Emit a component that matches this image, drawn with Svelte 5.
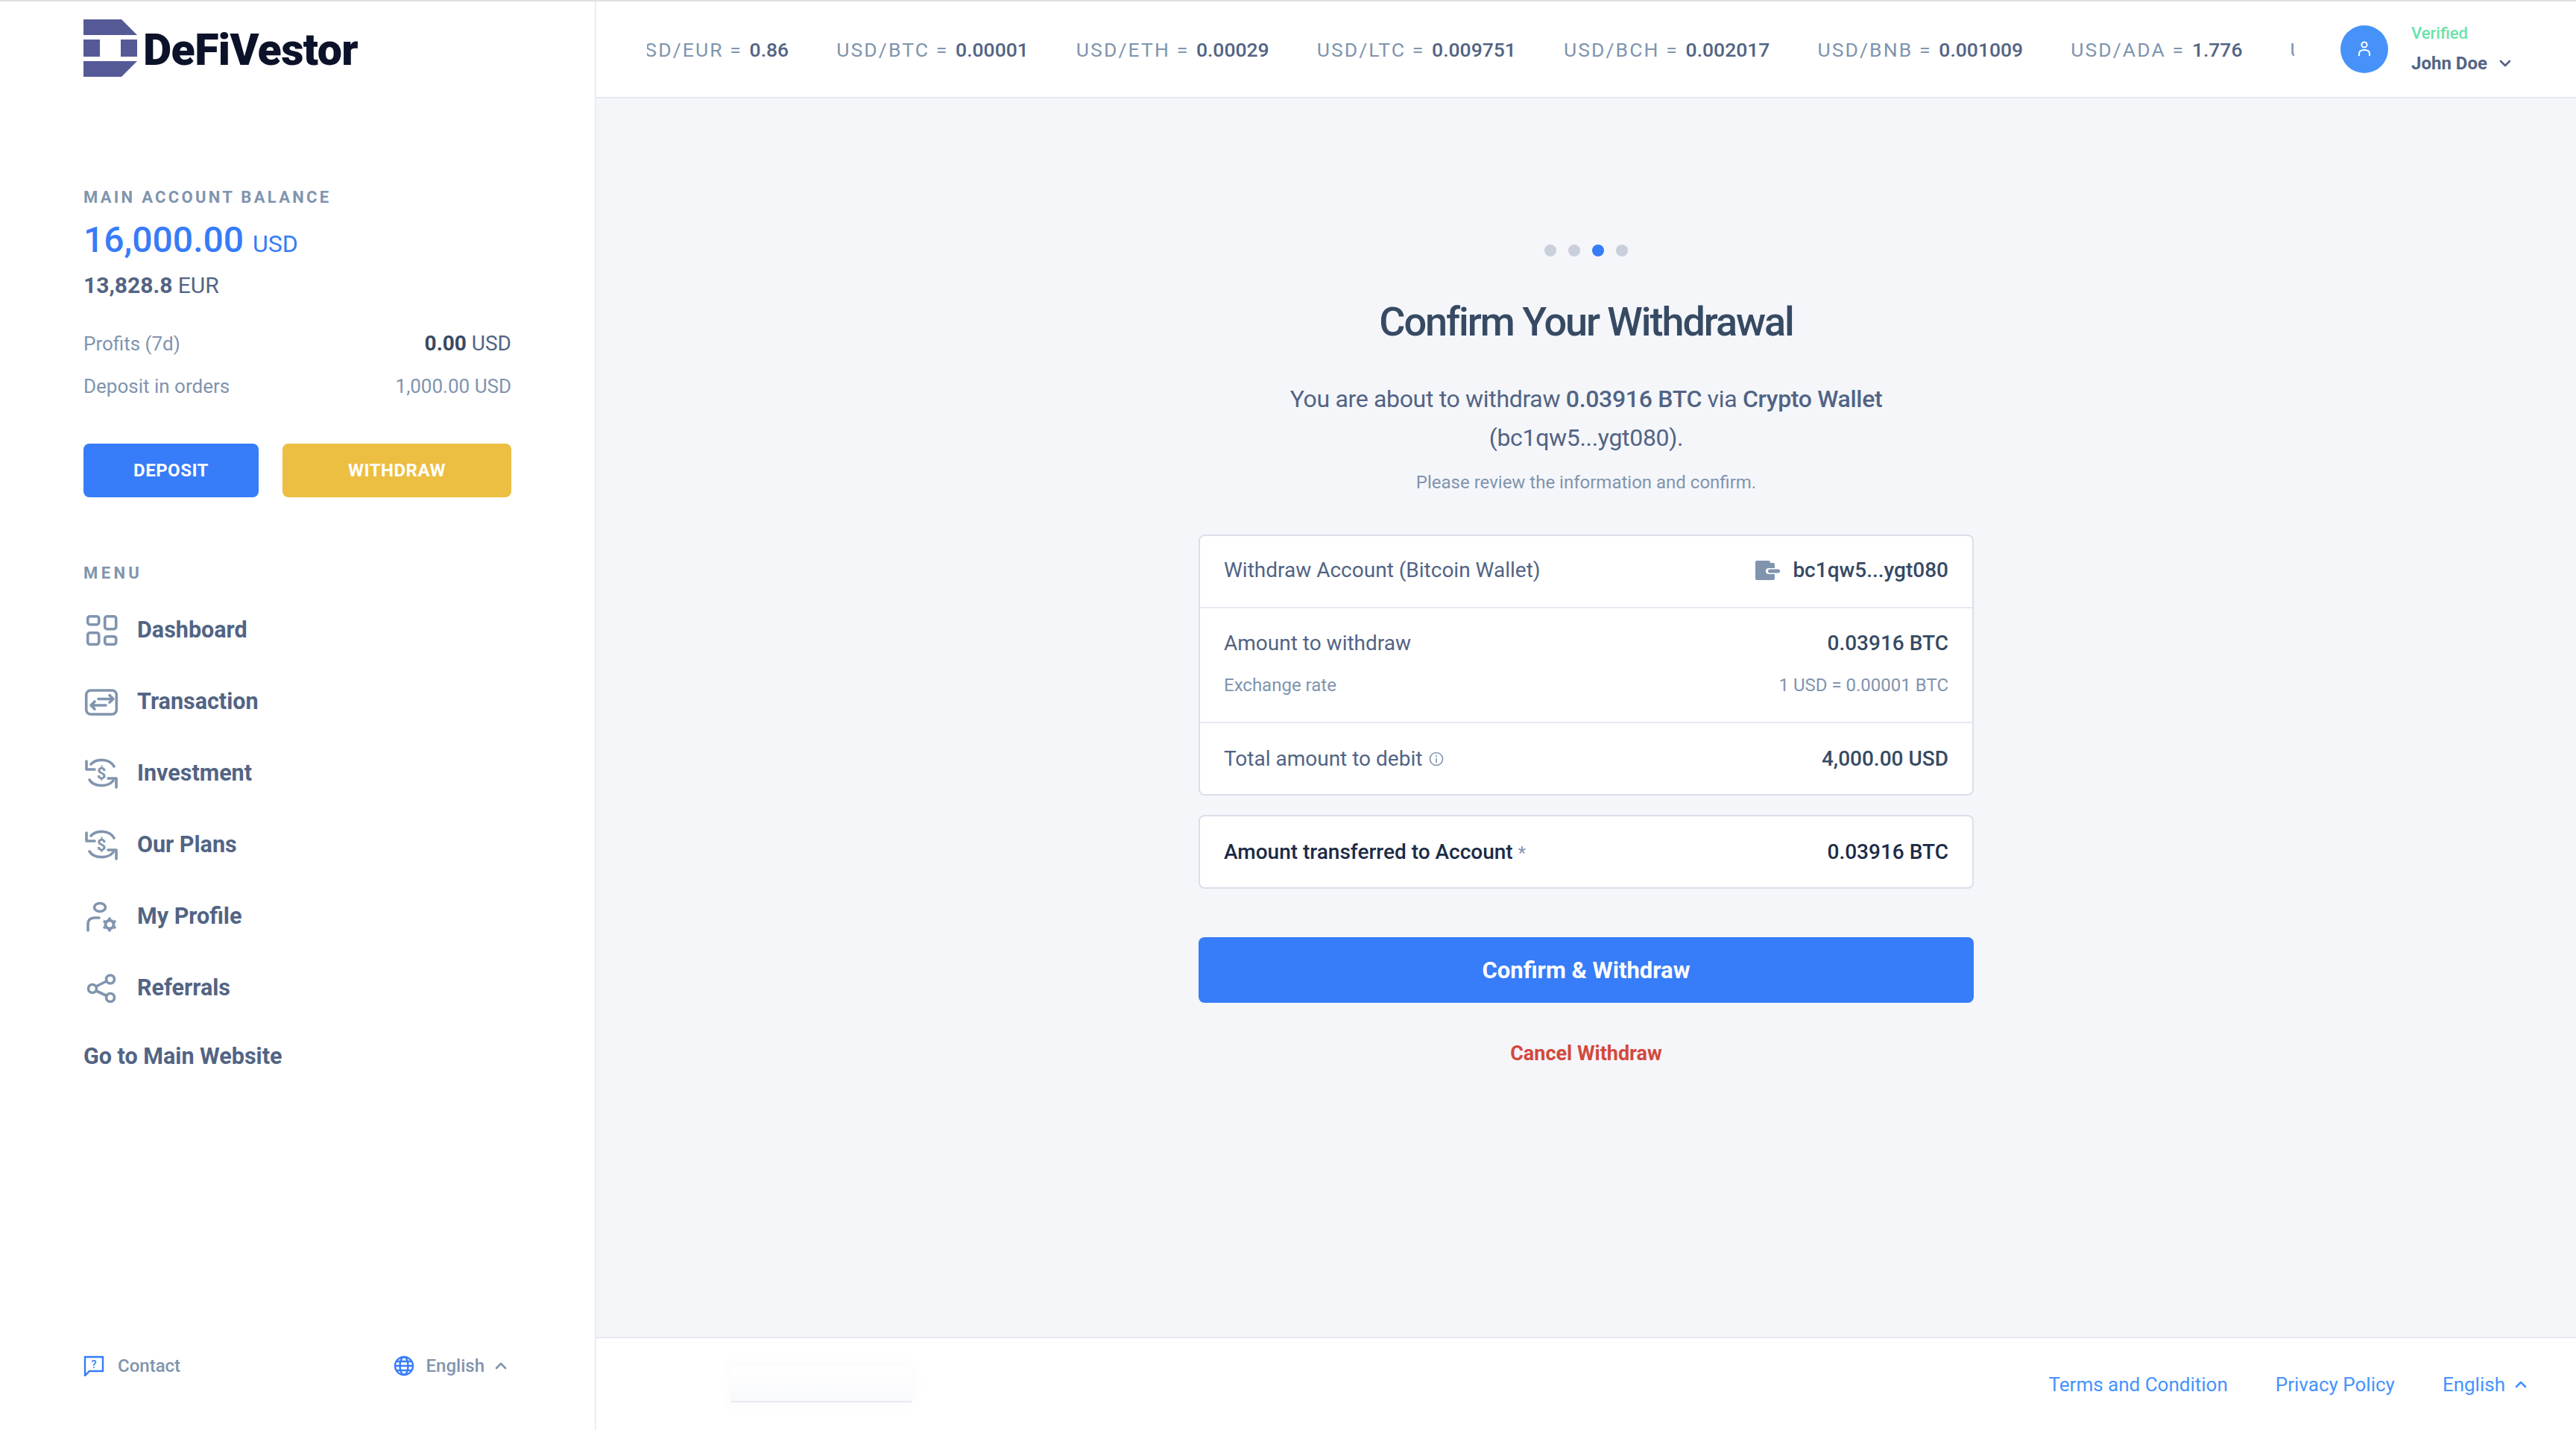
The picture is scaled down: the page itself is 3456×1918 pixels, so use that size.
<script>
  const rates = [
    ['USD/EUR', '0.86'], ['USD/BTC', '0.00001'], ['USD/ETH', '0.00029'], ['USD/LTC', '0.009751'],
    ['USD/BCH', '0.002017'], ['USD/BNB', '0.001009'], ['USD/ADA', '1.776'], ['USD/XRP', '']
  ];
  const menu = ['dash', 'tx', 'inv', 'plans', 'prof', 'ref'];
  const labels = { dash: 'Dashboard', tx: 'Transaction', inv: 'Investment', plans: 'Our Plans', prof: 'My Profile', ref: 'Referrals' };
</script>

{#snippet cycle()}
  <path d="M8 11 A18 14 0 0 1 39 14" />
  <path d="M2 7 V18 H13" />
  <path d="M6 32 A18 13 0 0 0 38 33" />
  <path d="M31 30 H42 V42" />
  <text x="22" y="31" text-anchor="middle" class="dollar">$</text>
{/snippet}

<div class="page">
  <aside class="side">
    <div class="brand">
      <svg class="mark" viewBox="0 0 72 77" aria-hidden="true">
        <path d="M0 0H51L72 21H0Z" /><path d="M0 27H22V50H0Z" /><path d="M50 27H72V50H50Z" /><path d="M0 56H72L51 77H0Z" />
      </svg>
      <span class="word">DeFiVestor</span>
    </div>

    <div class="over first">Main Account Balance</div>
    <div class="amount">16,000.00 <small>USD</small></div>
    <div class="eur"><b>13,828.8</b> EUR</div>

    <div class="stats">
      <div class="stat"><span>Profits (7d)</span><span class="dark"><b>0.00</b> USD</span></div>
      <div class="stat"><span>Deposit in orders</span><span>1,000.00 USD</span></div>
    </div>

    <div class="actions">
      <button class="btn dep">DEPOSIT</button>
      <button class="btn wit">WITHDRAW</button>
    </div>

    <div class="over menu-label">Menu</div>
    <nav class="menu">
      {#each menu as m}
        <div class="item">
          <svg class="ic" viewBox="0 0 44 44" aria-hidden="true">
            {#if m === 'dash'}
              <rect x="3.7" y="4.7" width="15" height="11" rx="3" />
              <rect x="26.7" y="4.7" width="15" height="17" rx="3" />
              <rect x="3.7" y="26.7" width="15" height="15.6" rx="3" />
              <rect x="26.7" y="31.7" width="15" height="10.6" rx="3" />
            {:else if m === 'tx'}
              <rect x="1.7" y="8" width="40.6" height="32" rx="6" />
              <path d="M18 19.5 H38 M33 14.5 L38 19.5 L33 24" />
              <path d="M8 28 H28 M13 23 L8 28 L13 33" />
            {:else if m === 'inv' || m === 'plans'}
              {@render cycle()}
            {:else if m === 'prof'}
              <ellipse cx="20" cy="11" rx="7.5" ry="5.5" />
              <path d="M4 42 V33 Q4 26 12 25 H19" />
              <circle cx="33" cy="34" r="5.5" class="gearring" />
              <path class="teeth" d="M33 24.5 V27 M33 41 V43.5 M24.8 29.2 L27 30.5 M39 37.5 L41.2 38.8 M24.8 38.8 L27 37.5 M39 30.5 L41.2 29.2" />
            {:else}
              <circle cx="10" cy="24" r="5.5" />
              <circle cx="34" cy="11.5" r="5.5" />
              <circle cx="34" cy="36" r="5.5" />
              <path d="M15 21 L29 14 M15 27 L29 33.5" />
            {/if}
          </svg>
          <span>{labels[m]}</span>
        </div>
      {/each}
    </nav>
    <div class="gomain">Go to Main Website</div>

    <div class="side-foot">
      <div class="sf-item">
        <svg class="bl" viewBox="0 0 28 28" aria-hidden="true"><path d="M2 2 H26 V21 H8 L2 27 Z" /><text x="14" y="17" text-anchor="middle" class="q">?</text></svg>
        <span>Contact</span>
      </div>
      <div class="sf-item right">
        <svg class="bl" viewBox="0 0 28 28" aria-hidden="true"><circle cx="14" cy="14" r="12" /><ellipse cx="14" cy="14" rx="5.5" ry="12" /><path d="M2 14 H26 M4 8 H24 M4 20 H24" /></svg>
        <span>English</span>
        <svg class="chev lift" viewBox="0 0 16 10" aria-hidden="true"><path d="M2 8 L8 2 L14 8" /></svg>
      </div>
    </div>
  </aside>

  <div class="main">
    <header class="top">
      <div class="ticker">
        <div class="track">
          {#each rates as r}
            <div class="rate"><span class="pair">{r[0]} =</span> <b>{r[1]}</b></div>
          {/each}
        </div>
      </div>
      <div class="user">
        <div class="avatar">
          <svg viewBox="0 0 20 24" aria-hidden="true"><circle cx="10" cy="6" r="3.6" /><path d="M3 21 V18 Q3 13 10 13 Q17 13 17 18 V21" /></svg>
        </div>
        <div class="who">
          <div class="verified">Verified</div>
          <div class="name">John Doe <svg class="chev dk" viewBox="0 0 16 10" aria-hidden="true"><path d="M2 2 L8 8 L14 2" /></svg></div>
        </div>
      </div>
    </header>

    <main class="content">
      <div class="dots"><i></i><i></i><i class="on"></i><i></i></div>
      <h1>Confirm Your Withdrawal</h1>
      <p class="lead">You are about to withdraw <b>0.03916 BTC</b> via <b>Crypto Wallet</b><br />(bc1qw5...ygt080).</p>
      <p class="note">Please review the information and confirm.</p>

      <section class="card one">
        <div class="row r1">
          <span>Withdraw Account (Bitcoin Wallet)</span>
          <span class="addr">
            <svg class="wallet" viewBox="0 0 33 26" aria-hidden="true"><path d="M2 0 H18 Q20 0 20 2 V3 H24 Q26 3 26 5 V10 H18 Q14 10 14 14 Q14 18 18 18 H26 V24 Q26 26 24 26 H2 Q0 26 0 24 V2 Q0 0 2 0Z" /><rect x="17" y="11.5" width="16" height="5" rx="2.5" /></svg>
            <strong>bc1qw5...ygt080</strong>
          </span>
        </div>
        <div class="row r2">
          <div class="line"><span>Amount to withdraw</span><strong>0.03916 BTC</strong></div>
          <div class="line sub"><span>Exchange rate</span><span>1 USD = 0.00001 BTC</span></div>
        </div>
        <div class="row r3">
          <span class="tot">Total amount to debit
            <svg class="info" viewBox="0 0 20 20" aria-hidden="true"><circle cx="10" cy="10" r="8.5" /><path d="M10 9 V15 M10 5 V7" /></svg>
          </span>
          <strong>4,000.00 USD</strong>
        </div>
      </section>

      <section class="card two">
        <div class="row r4"><span class="ttl">Amount transferred to Account <em>*</em></span><strong>0.03916 BTC</strong></div>
      </section>

      <button class="confirm">Confirm &amp; Withdraw</button>
      <div class="cancel">Cancel Withdraw</div>
    </main>

    <footer class="foot">
      <div class="ghost"></div>
      <span>Terms and Condition</span>
      <span>Privacy Policy</span>
      <span class="lang">English <svg class="chev bluec" viewBox="0 0 16 10" aria-hidden="true"><path d="M2 8 L8 2 L14 8" /></svg></span>
    </footer>
  </div>
</div>

<style>
  :global(body) { margin: 0; background: #fff; }
  * { box-sizing: border-box; }
  .page {
    width: 3456px; height: 1918px; display: grid; grid-template-columns: 800px 1fr;
    border-top: 2px solid #e0e0e0; font-family: Roboto, "Liberation Sans", sans-serif;
    overflow: hidden; color: #526484; font-size: 28px;
  }
  .side { display: flex; flex-direction: column; padding: 24px 112px 66px; border-right: 2px solid #e9ecf3; background: #fff; height: 1916px; }
  .brand { display: flex; height: 77px; gap: 8px; }
  .mark { width: 72px; height: 77px; fill: #555a97; flex: none; }
  .word { font-size: 59px; font-weight: 900; color: #0b1229; line-height: 42px; padding-top: 20px; letter-spacing: -0.01em; white-space: nowrap; }
  .over { font-size: 22px; font-weight: 700; color: #8094ae; text-transform: uppercase; letter-spacing: .15em; line-height: 30px; }
  .first { margin-top: 147px; }
  .amount { margin-top: 12px; line-height: 60px; font-size: 48px; font-weight: 500; color: #377cf8; white-space: nowrap; }
  .amount small { font-size: 32px; font-weight: 400; }
  .eur { margin-top: 6px; line-height: 40px; font-size: 30px; color: #526484; }
  .eur b { font-weight: 700; }
  .stats { margin-top: 29px; }
  .stat { display: flex; justify-content: space-between; height: 57px; align-items: center; font-size: 26px; color: #8094ae; }
  .dark { color: #526484; font-size: 28px; }
  .dark b { color: #364a63; font-weight: 700; }
  .actions { margin-top: 49px; display: grid; grid-template-columns: 235px 307px; column-gap: 32px; }
  .btn { height: 72px; border: 0; border-radius: 8px; color: #fff; font: 700 24px Roboto, sans-serif; letter-spacing: .02em; }
  .dep { background: #377cf8; }
  .wit { background: #ecbe41; }
  .menu-label { margin-top: 87px; letter-spacing: .2em; }
  .menu { margin-top: 12px; }
  .item { height: 96px; display: flex; align-items: center; gap: 26px; font-size: 30.5px; font-weight: 700; color: #526484; padding-left: 2px; }
  .ic { width: 44px; height: 44px; fill: none; stroke: #8094ae; stroke-width: 3.6; stroke-linecap: round; stroke-linejoin: round; flex: none; overflow: visible; }
  .ic .dollar { fill: #8094ae; stroke: none; font: 700 22px Roboto, sans-serif; }
  .ic .gearring { stroke-width: 4; }
  .ic .teeth { stroke-width: 3.6; stroke-linecap: butt; }
  .gomain { margin-top: 25px; line-height: 40px; font-size: 30.5px; font-weight: 700; color: #526484; }
  .side-foot { margin-top: auto; display: flex; justify-content: space-between; height: 40px; align-items: center; font-size: 24px; font-weight: 500; color: #8094ae; }
  .sf-item { display: flex; align-items: center; gap: 18px; }
  .sf-item.right { gap: 16px; margin-right: 6px; }
  .chev.lift { margin-left: -2px; }
  .bl { width: 28px; height: 28px; fill: none; stroke: #377cf8; stroke-width: 2.4; }
  .bl .q { fill: #377cf8; stroke: none; font: 500 15px Roboto, sans-serif; }
  .chev { width: 16px; height: 10px; fill: none; stroke: #8094ae; stroke-width: 2.6; stroke-linecap: round; stroke-linejoin: round; }

  .main { display: flex; flex-direction: column; min-width: 0; background: #f5f6fa; height: 1916px; }
  .top { height: 130px; flex: none; background: #fff; border-bottom: 2px solid #e5e9f2; display: flex; align-items: center; padding-left: 68px; }
  .ticker { width: 2210px; overflow: hidden; flex: none; }
  .track { display: flex; gap: 64px; white-space: nowrap; margin-left: -22px; }
  .rate { font-size: 26.5px; font-weight: 500; color: #526484; flex: none; }
  .rate .pair { color: #8094ae; font-weight: 400; letter-spacing: .08em; margin-right: 3px; }
  .rate b { font-weight: 500; }
  .user { margin-left: 62px; display: flex; align-items: center; gap: 31px; }
  .avatar { width: 64px; height: 64px; border-radius: 50%; background: #4792f8; display: flex; align-items: center; justify-content: center; }
  .avatar svg { width: 20px; height: 24px; fill: none; stroke: #fff; stroke-width: 2; }
  .who { display: flex; flex-direction: column; margin-top: -2px; }
  .verified { font-size: 22px; font-weight: 500; color: #6be2aa; line-height: 40px; }
  .name { font-size: 24px; font-weight: 700; color: #526484; line-height: 40px; display: flex; align-items: center; gap: 16px; white-space: nowrap; }
  .chev.dk { stroke: #526484; }

  .content { flex: 1; display: flex; flex-direction: column; align-items: center; padding-top: 196px; min-height: 0; }
  .dots { display: flex; gap: 16px; height: 16px; }
  .dots i { width: 16px; height: 16px; border-radius: 50%; background: #c9d0db; }
  .dots i.on { background: #377cf8; }
  h1 { margin: 56px 0 0; font-size: 54px; line-height: 64px; font-weight: 500; color: #364a63; letter-spacing: -0.038em; }
  .lead { margin: 45px 0 0; font-size: 32px; line-height: 52px; text-align: center; color: #526484; letter-spacing: -0.01em; }
  .lead b { font-weight: 500; }
  .note { margin: 16px 0 0; font-size: 24px; line-height: 36px; color: #8094ae; }
  .card { width: 1040px; background: #fff; border: 2px solid #dbdfea; border-radius: 8px; }
  .card.one { margin-top: 52px; height: 350px; }
  .card.two { margin-top: 26px; height: 99px; }
  .row { display: flex; justify-content: space-between; align-items: center; padding: 0 32px; font-size: 28px; color: #526484; }
  strong { font-weight: 500; color: #364a63; }
  .r1 { height: 97px; border-bottom: 2px solid #e5e9f2; padding-bottom: 4px; }
  .addr { display: flex; align-items: center; gap: 17px; }
  .wallet { width: 33px; height: 26px; fill: #8094ae; }
  .r2 { height: 154px; display: block; border-bottom: 2px solid #e5e9f2; padding-top: 26px; }
  .line { display: flex; justify-content: space-between; align-items: center; height: 40px; }
  .sub { margin-top: 17px; font-size: 24px; color: #8094ae; }
  .r3 { height: 95px; }
  .tot { display: flex; align-items: center; gap: 9px; }
  .info { width: 20px; height: 20px; fill: none; stroke: #8094ae; stroke-width: 1.6; }
  .r4 { height: 95px; }
  .ttl { font-weight: 500; color: #1c2b46; }
  .ttl em { font-style: normal; color: #8094ae; font-weight: 400; font-size: 24px; }
  .r4 strong { color: #1c2b46; }
  .confirm { margin-top: 65px; width: 1040px; height: 88px; flex: none; border: 0; border-radius: 8px; background: #377cf8; color: #fff; font: 700 31px Roboto, sans-serif; }
  .cancel { margin-top: 48px; line-height: 40px; font-size: 27px; font-weight: 700; color: #d3493c; }

  .foot { height: 125px; flex: none; background: #fff; border-top: 2px solid #e5e9f2; display: flex; align-items: center; justify-content: flex-end; gap: 64px; padding-right: 66px; font-size: 26px; color: #4593fd; position: relative; }
  .lang { display: flex; align-items: center; gap: 13px; }
  .chev.bluec { stroke: #4593fd; }
  .ghost { position: absolute; left: 180px; top: 38px; width: 243px; height: 48px; border-bottom: 2px solid #e5e9f2; background: linear-gradient(#fff, #f8f9fc); box-shadow: 0 0 16px 8px #fcfcfe; }
</style>
